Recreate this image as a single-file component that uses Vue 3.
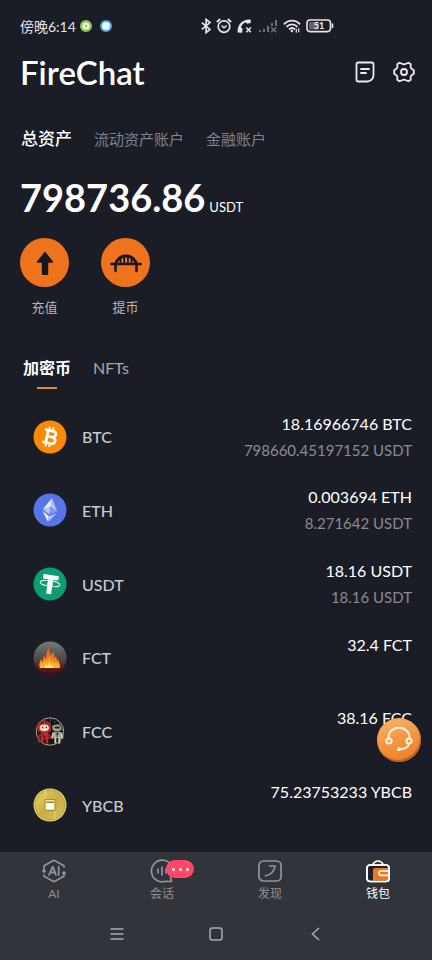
<template>
  <div class="wallet">
    <div class="status-bar">
      <div class="status-left">
        <span>傍晚6:14</span>
        <svg width="12" height="12" viewBox="0 0 12 12">
          <circle cx="6" cy="6" r="6" fill="#8fc650" />
          <circle cx="6" cy="6" r="3.6" fill="#f1f9e4" />
          <path d="M5 4.2 7.8 6 5 7.8z" fill="#8fc650" />
        </svg>
        <svg class="dot-blue" width="12" height="12" viewBox="0 0 12 12">
          <circle cx="6" cy="6" r="6" fill="#4aa9dc" />
          <circle cx="6" cy="6" r="3.9" fill="#eefaff" />
        </svg>
      </div>
      <div class="status-right">
        <svg width="10" height="16" viewBox="0 0 10 16" fill="none" stroke="#e6e6e8" stroke-width="1.7">
          <path d="M.8 4.6 9 11.4 5.1 14.6V1.4L9 4.6.8 11.4" />
        </svg>
        <svg width="16" height="16" viewBox="0 0 16 16" fill="none" stroke="#e6e6e8" stroke-width="1.7">
          <circle cx="8" cy="8.6" r="5.8" />
          <path d="M5.6 7.6 8 9.8 10.6 7.6" stroke-width="1.4" />
          <path d="M.8 4 4.2 1M15.2 4 11.8 1" />
        </svg>
        <svg width="16" height="16" viewBox="0 0 16 16" fill="#e6e6e8">
          <path d="M.8 14.6C-.4 7.4 5.4 1 12.6 1.4c.8 0 1.2.5 1.2 1.2v1.6c0 .7-.5 1.1-1.1 1.1l-2.8.1c-.6 0-1-.4-1-1V3.9C6 5.2 4.2 7.4 4 10h.5c.6 0 1 .4 1 1l-.2 2.8c0 .6-.4 1-1 1z" />
          <path d="m9.3 9.5 4.6 4.8M13.9 9.5l-4.6 4.8" fill="none" stroke="#e6e6e8" stroke-width="1.6" />
        </svg>
        <svg width="20" height="16" viewBox="0 0 20 16" fill="#6d6e74">
          <path d="M1 12h2v2H1zM5 11h2v3H5zM9 8h2v6H9zM13 5h2v3h-2zM17 2h2v6h-2z" />
          <path d="m13 9.2 5.4 5M18.4 9.2l-5.4 5" fill="none" stroke="#6d6e74" stroke-width="1.5" />
        </svg>
        <svg width="18" height="16" viewBox="0 0 19 16" fill="none" stroke="#e6e6e8" stroke-width="1.9">
          <path d="M1 6.2C5.8 1 13.2 1 18 6.2M3.7 9C7.2 5.4 11.8 5.4 15.3 9M6.3 11.6c2-1.9 4.4-1.9 6.4 0" />
          <path d="M9.5 11.8 7.6 13l1.9 2 1.5-2z" fill="#e6e6e8" stroke="none" />
          <path d="M14 11v4M16.6 10.5v4" stroke-width="1.3" />
        </svg>
        <svg width="28" height="14" viewBox="0 0 28 14">
          <rect x="1" y="1" width="23.5" height="11.6" rx="3" fill="none" stroke="#e6e6e8" stroke-width="1.6" />
          <rect x="3" y="3" width="10" height="7.6" rx="1" fill="#62646c" />
          <path d="M26.5 4.5V9" stroke="#e6e6e8" stroke-width="1.6" />
          <text x="13" y="9.8" class="battery-text" text-anchor="middle">51</text>
        </svg>
      </div>
    </div>

    <header class="title-bar">
      <h1>FireChat</h1>
      <div class="title-actions">
        <button type="button" aria-label="账单">
          <svg width="20" height="22" viewBox="0 0 20 22" fill="none" stroke="#ececee" stroke-width="1.8" stroke-linecap="round">
            <path d="M3.3 1.5h13.4c1 0 1.8.8 1.8 1.8v10.9c0 3.5-2.8 6.3-6.3 6.3H3.3c-1 0-1.8-.8-1.8-1.8V3.3c0-1 .8-1.8 1.8-1.8z" />
            <path d="M6 8h8M6 12h5" />
          </svg>
        </button>
        <button type="button" aria-label="设置">
          <svg width="22" height="22" viewBox="0 0 22 22" fill="none" stroke="#ececee" stroke-width="1.8" stroke-linejoin="round">
            <path d="M6.5 1.7 9 2.8Q11 4 13 2.8L15.5 1.7 17.8 3.2 17.6 5.8Q17.7 7.6 19.3 8.2L20.8 9.3V12.7L19.3 13.8Q17.7 14.4 17.6 16.2L17.8 18.8 15.5 20.3 13 19.2Q11 18 9 19.2L6.5 20.3 4.2 18.8 4.4 16.2Q4.3 14.4 2.7 13.8L1.2 12.7V9.3L2.7 8.2Q4.3 7.6 4.4 5.8L4.2 3.2z" />
            <circle cx="11" cy="11" r="3" />
          </svg>
        </button>
      </div>
    </header>

    <div class="account-tabs">
      <button
        v-for="name in accounts"
        :key="name"
        type="button"
        :class="{ active: name === account }"
        @click="account = name"
      >{{ name }}</button>
    </div>

    <div class="balance"><strong>798736.86</strong><span>USDT</span></div>

    <div class="actions">
      <button type="button">
        <span class="action-icon">
          <svg width="32" height="32" viewBox="0 0 32 32">
            <path d="M16 4.5 24 14.5Q24.5 15.7 23.3 15.7H19.2V27q0 1-1 1H13.8q-1 0-1-1V15.7H8.7Q7.5 15.7 8 14.5z" fill="#17181f" />
          </svg>
        </span>
        充值
      </button>
      <button type="button">
        <span class="action-icon">
          <svg width="32" height="32" viewBox="0 0 32 32" fill="none" stroke="#17181f" stroke-linecap="round">
            <path d="M1.2 17h29.6" stroke-width="2.4" />
            <path d="M5.5 17v7M26.5 17v7" stroke-width="2.6" />
            <path d="M5.5 17C7.5 11.5 11.5 9 16 9s8.5 2.5 10.5 8" stroke-width="2.8" />
            <path d="M10.5 11.5V17M14.2 9.5V17M17.9 9.5V17M21.5 11.5V17" stroke-width="1.7" />
          </svg>
        </span>
        提币
      </button>
    </div>

    <div class="asset-tabs">
      <button
        v-for="name in assetTypes"
        :key="name"
        type="button"
        :class="{ active: name === assetType }"
        @click="assetType = name"
      >{{ name }}</button>
    </div>

    <ul class="coins">
      <li v-for="coin in coins" :key="coin.name">
        <svg v-if="coin.name === 'BTC'" class="coin-icon" viewBox="0 0 34 34">
          <circle cx="17" cy="17" r="16.5" fill="#f98b06" />
          <g transform="rotate(13 17 17)" fill="none" stroke="#fff">
            <path d="M10.5 10.7h7.8c5.2 0 5.2 6 0 6H14M18.3 16.7c6.2 0 6.2 6.7 0 6.7h-7.8" stroke-width="2.7" />
            <path d="M14 10v14" stroke-width="3" />
            <path d="M14.6 7v4M18.4 7v4M14.6 23v4M18.4 23v4" stroke-width="1.9" />
          </g>
        </svg>
        <svg v-else-if="coin.name === 'ETH'" class="coin-icon" viewBox="0 0 34 34">
          <circle cx="17" cy="17" r="16.5" fill="#5676e8" />
          <g transform="rotate(10 17 17)">
            <path d="M17 5 9.7 17.3 17 14z" fill="#e5eafc" />
            <path d="M17 5 24.3 17.3 17 14z" fill="#b3c1f5" />
            <path d="M9.7 17.3 17 14v7.6z" fill="#bdc9f7" />
            <path d="M24.3 17.3 17 14v7.6z" fill="#8299ec" />
            <path d="M9.7 19 17 23.3V29z" fill="#f2f4fe" />
            <path d="M24.3 19 17 23.3V29z" fill="#b7c5f6" />
          </g>
        </svg>
        <svg v-else-if="coin.name === 'USDT'" class="coin-icon" viewBox="0 0 34 34">
          <circle cx="17" cy="17" r="16.5" fill="#0e9c73" />
          <g transform="rotate(8 17 17)">
            <path d="M9.3 8h15.4v4.5h-5.2V27h-5V12.5H9.3z" fill="#fff" />
            <ellipse cx="17" cy="16.5" rx="10" ry="2.9" fill="none" stroke="#d9f2e9" stroke-width="1" />
            <path d="M14.5 15.5h5v3h-5z" fill="#fff" />
          </g>
        </svg>
        <svg v-else-if="coin.name === 'FCT'" class="coin-icon" viewBox="0 0 34 34">
          <defs>
            <linearGradient id="fctBg" x1="0" y1="0" x2="0" y2="1">
              <stop offset="0" stop-color="#737b7c" />
              <stop offset=".55" stop-color="#4c4744" />
              <stop offset=".8" stop-color="#6b1a14" />
              <stop offset="1" stop-color="#3a1014" />
            </linearGradient>
            <linearGradient id="fctFlame" x1="0" y1="0" x2="0" y2="1">
              <stop offset="0" stop-color="#e4551b" />
              <stop offset=".6" stop-color="#fa801c" />
              <stop offset="1" stop-color="#ffc043" />
            </linearGradient>
          </defs>
          <circle cx="17" cy="17" r="16.5" fill="url(#fctBg)" />
          <path d="M7 27C5.5 23.5 7 20 8.2 17.5c.4 1.500 0 2.500.8 3.500 1.500-2 .5-4.500 2.300-7 .1 1.800.4 2.800 1.100 3.800C14.5 13.500 12.500 10 16 6c-.5 3.500 1.500 5 1.400 8.500 1.200-1.200 1.300-2.500 3.600-4.500-.8 3 .7 4.500.3 7.500.8-.8.7-1.700 1.700-2.500.2 2 1.200 3 1 5.500.8-.6.6-1.500 1.600-2.500-.2 3.500 2.400 5.500.9 9z" fill="url(#fctFlame)" />
          <path d="M9 27c-.8-2 .4-3.500.4-5 1.200 1 .8 2 1.600 2.800 1.300-1.600.7-4 2.300-5.800.2 2 1.200 3 1.300 4.500 1.200-2.600.4-5 2-7.500.5 3 1.600 4.500 1.500 7 1-1.200.8-2.500 1.900-3.700.4 2 .6 3.200 1.200 4.400.8-.7.7-1.700 1.500-2.400.1 2 1.500 3.500.5 5.700z" fill="#ffb32d" />
          <path d="M12 27c-.4-2 1-2.500 1-4 1 1 .9 2 1.500 2.500 1.100-1.200.8-2.500 1.800-3.800.6 1.600.8 2.800 1.300 3.800.8-.6.9-1.300 1.600-2 .3 1.300 1 2.200.5 3.500z" fill="#fff07b" />
        </svg>
        <svg v-else-if="coin.name === 'FCC'" class="coin-icon" viewBox="0 0 34 34">
          <circle cx="17" cy="17.5" r="13.7" fill="#101820" stroke="#b9a57c" stroke-width="1" />
          <path d="M17 6h1M21 8h1M26 10h1M14 8h1M19 12h1M29 16h1M5 17h1M25 29h1" stroke="#8296b5" />
          <!-- devil -->
          <path d="M4.5 15C3.5 11 5.5 10 5 7.5l3.6 2.3L12 4.5l1.8 4.5L17.5 7.5c-.7 2.5 1.3 4 .6 8C17.5 20.5 5.8 20.5 4.5 15z" fill="#b5262b" />
          <ellipse cx="11.3" cy="13.8" rx="4.7" ry="3.4" fill="#f1dec7" />
          <path d="M9.6 12.8v1.5M13.3 12.8v1.5" stroke="#44221d" stroke-width="1.2" />
          <path d="M8.3 18h6.5l1 7H7.5z" fill="#c12a2d" />
          <path d="M9.3 24.5v5M14 24.5v5" stroke="#c12a2d" stroke-width="2.6" />
          <path d="M10 19.5V23h3" fill="none" stroke="#391216" stroke-width="1" />
          <path d="M8 20l-3 4M15.5 20l2 4.5M5 26l2 2" stroke="#a92227" stroke-width="2" />
          <!-- robot -->
          <ellipse cx="24" cy="14" rx="4.6" ry="3.4" fill="#a89f8a" />
          <path d="M21.8 13.5h5" stroke="#22242a" stroke-width="2" />
          <path d="M21 18h6.5l.5 6h-7.5z" fill="#b4ab95" />
          <path d="M20.5 18.5l-1.5 6M28 18.5l1.5 6M22.3 23v6.5M26.3 23v6.5" stroke="#d2c6a7" stroke-width="2" />
          <path d="M22.5 20H26M24.2 18v5" stroke="#33343a" stroke-width="1" />
        </svg>
        <svg v-else class="coin-icon" viewBox="0 0 34 34">
          <defs>
            <linearGradient id="goldBg" x1="0" y1="0" x2="1" y2="1">
              <stop offset="0" stop-color="#ead768" />
              <stop offset=".5" stop-color="#c9ae45" />
              <stop offset="1" stop-color="#d8c05a" />
            </linearGradient>
          </defs>
          <circle cx="17" cy="17" r="16.5" fill="#e8d670" />
          <circle cx="17" cy="17" r="15" fill="url(#goldBg)" stroke="#a98f32" stroke-width=".8" />
          <path d="M12.5 2v19.5h9.3V33" fill="none" stroke="#e6d67c" stroke-width="1" />
          <path d="M12 11.5h10v11H12z" fill="#f2e495" stroke="#a88f35" stroke-width="1" />
          <path d="M13.3 13.5h7.7v7.5h-7.7z" fill="#fffef0" />
          <path d="M13.3 13.5H21V15h-7.7z" fill="#93803d" />
        </svg>
        <span class="coin-name">{{ coin.name }}</span>
        <div class="amounts">
          <div class="amount">{{ coin.amount }} {{ coin.name }}</div>
          <div class="value">{{ coin.value }}</div>
        </div>
      </li>
    </ul>

    <div class="bottom">
      <button type="button" class="support" aria-label="客服">
        <svg width="32" height="32" viewBox="0 0 32 32" fill="none" stroke="#fff3df" stroke-width="2">
          <path d="M5.5 14.5C5 8 10 3.8 16 3.8S27 8 26.5 14.5" />
          <circle cx="6" cy="17" r="2.6" />
          <circle cx="26" cy="17" r="2.6" />
          <path d="M26 19.7C25 23.5 21.5 25 17 25.2" />
          <circle cx="16" cy="25.2" r="1.9" fill="#fff3df" stroke="none" />
        </svg>
      </button>

      <nav class="tab-bar">
        <a href="#ai">
          <svg width="24" height="24" viewBox="0 0 24 24" fill="none" stroke="#92949c" stroke-width="1.7" stroke-linecap="round" stroke-linejoin="round">
            <path d="M2 10V6.7L12 1.2l10 5.5V8M22 14v3.3l-10 5.5-10-5.5V16" />
            <circle cx="2" cy="12" r="1" fill="#92949c" />
            <circle cx="22" cy="14" r="1" fill="#92949c" />
            <path d="M7 16l3.500-8h.5l3 8M8.2 13.5h5M16.7 8v8" stroke-width="1.8" />
          </svg>
          AI
        </a>
        <a href="#chat">
          <svg width="24" height="24" viewBox="0 0 24 24" fill="none" stroke="#92949c" stroke-width="1.7" stroke-linecap="round" stroke-linejoin="round">
            <path d="M12 1.2A10.8 10.8 0 1 0 15.5 22.3L21.5 22.5 20.5 19A10.8 10.8 0 0 0 12 1.2z" />
            <path d="M8 10v4M12 8v8M16 10v4" />
          </svg>
          <span class="badge"><i></i><i></i><i></i></span>
          会话
        </a>
        <a href="#discover">
          <svg width="24" height="24" viewBox="0 0 24 24" fill="none" stroke="#92949c" stroke-width="1.7" stroke-linecap="round" stroke-linejoin="round">
            <rect x=".9" y="2" width="22.2" height="20" rx="4.5" />
            <path d="M11.5 7h5.5C16.5 12 12.5 15.5 7.500 16.8" />
          </svg>
          发现
        </a>
        <a href="#wallet" class="active">
          <svg width="24" height="24" viewBox="0 0 24 24" fill="none" stroke="#fff" stroke-width="1.7">
            <path d="M6.5 6C8 3.2 9.7 2 12 2s4 1.2 5.5 4" />
            <rect x="1" y="6" width="22" height="16.5" rx="3" fill="#1f2028" />
            <path d="M7 11q0-2 2-2h13v12.5H7z" fill="#ee761e" stroke="none" />
            <path d="M22.5 12H15q-2 0-2 2.2t2 2.2h7.5" />
            <rect x="1" y="6" width="22" height="16.5" rx="3" />
          </svg>
          钱包
        </a>
      </nav>

      <div class="system-nav">
        <button type="button" aria-label="菜单">
          <svg width="14" height="14" viewBox="0 0 14 14" fill="none" stroke="#aaabae" stroke-width="1.5">
            <path d="M.5 2h13M.5 7h13M.5 12h13" />
          </svg>
        </button>
        <button type="button" aria-label="主页">
          <svg width="14" height="14" viewBox="0 0 14 14" fill="none" stroke="#aaabae" stroke-width="1.5">
            <rect x="1" y="1" width="12" height="12" rx="2.5" />
          </svg>
        </button>
        <button type="button" aria-label="返回">
          <svg width="14" height="14" viewBox="0 0 14 14" fill="none" stroke="#aaabae" stroke-width="1.5">
            <path d="M11 1 4.5 7l6.5 6" />
          </svg>
        </button>
      </div>
    </div>
  </div>
</template>

<script setup>
import { ref } from 'vue'

const accounts = ['总资产', '流动资产账户', '金融账户']
const account = ref('总资产')

const assetTypes = ['加密币', 'NFTs']
const assetType = ref('加密币')

const coins = [
  { name: 'BTC', amount: '18.16966746', value: '798660.45197152 USDT' },
  { name: 'ETH', amount: '0.003694', value: '8.271642 USDT' },
  { name: 'USDT', amount: '18.16', value: '18.16 USDT' },
  { name: 'FCT', amount: '32.4', value: '' },
  { name: 'FCC', amount: '38.16', value: '' },
  { name: 'YBCB', amount: '75.23753233', value: '' }
]
</script>

<style>
body {
  margin: 0;
  background: #1b1d26;
}
</style>

<style scoped>
.wallet {
  display: flex;
  flex-direction: column;
  box-sizing: border-box;
  min-height: 100vh;
  background: #1b1d26;
  color: #fff;
  font-family: Lato, "Noto Sans CJK SC", sans-serif;
}

.wallet svg {
  display: block;
  flex: none;
}

button {
  padding: 0;
  border: 0;
  background: none;
  color: inherit;
  font: inherit;
  cursor: pointer;
}

.status-bar {
  display: flex;
  align-items: center;
  justify-content: space-between;
  height: 52px;
  padding: 0 98px 0 20px;
}

.status-left {
  display: flex;
  align-items: center;
  gap: 4px;
  color: #e0e0e2;
  font-size: 14px;
}

.dot-blue {
  margin-left: 4px;
}

.status-right {
  display: flex;
  align-items: center;
  gap: 5px;
}

.battery-text {
  fill: #f0f0f1;
  font-size: 9px;
  font-weight: 700;
}

.title-bar {
  display: flex;
  align-items: center;
  justify-content: space-between;
  height: 40px;
  padding: 0 17px 0 20px;
}

.title-bar h1 {
  margin: 0;
  font-size: 33px;
  font-weight: 600;
  line-height: 40px;
}

.title-actions {
  display: flex;
  align-items: center;
  gap: 18px;
}

.account-tabs {
  display: flex;
  align-items: center;
  gap: 22px;
  margin-top: 35px;
  padding: 0 21px;
  color: #7c818f;
  font-size: 15px;
  line-height: 24px;
}

.account-tabs .active {
  color: #fff;
  font-size: 17px;
  font-weight: 500;
}

.balance {
  display: flex;
  align-items: baseline;
  gap: 4px;
  margin-top: 22px;
  padding: 0 20px;
  line-height: 48px;
}

.balance strong {
  font-size: 38px;
  font-weight: 700;
}

.balance span {
  font-size: 13px;
}

.actions {
  display: flex;
  gap: 32px;
  margin-top: 7px;
  padding: 0 20px;
  color: #b5b6ba;
  font-size: 13px;
  line-height: 20px;
}

.actions button {
  display: flex;
  flex-direction: column;
  gap: 10px;
  align-items: center;
}

.action-icon {
  display: flex;
  align-items: center;
  justify-content: center;
  width: 49px;
  height: 49px;
  border-radius: 50%;
  background: #ee731c;
}

.asset-tabs {
  display: flex;
  gap: 22px;
  margin-top: 39px;
  padding: 0 23px;
  color: #a6a8b0;
  font-size: 16px;
  line-height: 24px;
}

.asset-tabs button {
  padding-bottom: 9px;
}

.asset-tabs .active {
  display: flex;
  flex-direction: column;
  align-items: center;
  gap: 7px;
  padding-bottom: 0;
  color: #fff;
  font-weight: 700;
}

.asset-tabs .active::after {
  content: "";
  width: 20px;
  height: 2px;
  background: #e5853b;
}

.coins {
  display: grid;
  flex: 1;
  grid-auto-rows: 1fr;
  margin: 0;
  padding: 11px 20px 10px 33px;
  list-style: none;
}

.coins li {
  display: flex;
  align-items: center;
}

.coin-icon {
  width: 34px;
  height: 34px;
}

.coin-name {
  margin-left: 15px;
  color: #c9cacd;
  font-size: 16px;
  font-weight: 500;
}

.amounts {
  flex: 1;
  line-height: 26px;
  text-align: right;
}

.amount {
  font-size: 16px;
}

.value {
  min-height: 26px;
  color: #8a8b91;
  font-size: 15px;
}

.bottom {
  position: relative;
  background: #32343c;
}

.support {
  position: absolute;
  right: 11px;
  bottom: 198px;
  display: flex;
  align-items: center;
  justify-content: center;
  width: 44px;
  height: 44px;
  border-radius: 50%;
  background: linear-gradient(160deg, #f9b569, #f0771c);
  box-shadow: inset -1px -2px 1px #a9642b;
}

.tab-bar {
  display: grid;
  grid-template-columns: repeat(4, 1fr);
  height: 56px;
}

.tab-bar a {
  position: relative;
  display: flex;
  flex-direction: column;
  align-items: center;
  gap: 2px;
  padding-top: 7px;
  color: #8d8f98;
  font-size: 12px;
  line-height: 18px;
  text-decoration: none;
}

.tab-bar .active {
  color: #fff;
}

.badge {
  position: absolute;
  top: 8px;
  left: calc(50% + 4px);
  display: flex;
  align-items: center;
  justify-content: center;
  gap: 4px;
  width: 28px;
  height: 18px;
  border-radius: 9px;
  background: #ff4866;
}

.badge i {
  width: 3px;
  height: 3px;
  border-radius: 50%;
  background: #fff;
}

.system-nav {
  display: flex;
  align-items: center;
  justify-content: center;
  gap: 85px;
  height: 52px;
}
</style>
